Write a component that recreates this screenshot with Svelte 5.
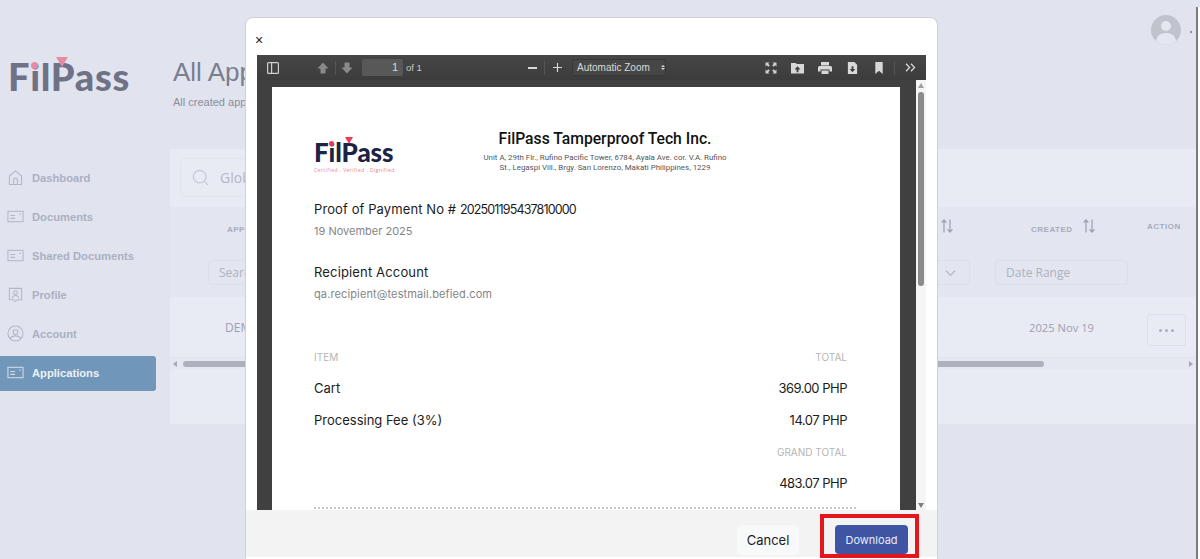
<script>
  const navItems = [
    { label: 'Dashboard', icon: 'home' },
    { label: 'Documents', icon: 'doc' },
    { label: 'Shared Documents', icon: 'doc' },
    { label: 'Profile', icon: 'profile' },
    { label: 'Account', icon: 'account' },
    { label: 'Applications', icon: 'doc', active: true }
  ];
</script>

<div class="page">
  <aside class="sidebar">
    <div class="logo">
      <span class="logo-text">FilPass</span>
      <i class="logo-dot"></i>
      <i class="logo-tri"></i>
    </div>
    <nav>
      {#each navItems as item}
        <div class="nav-item" class:active={item.active}>
          <svg class="nav-icon" viewBox="0 0 18 18" fill="none" stroke="currentColor" stroke-width="1.1">
            {#if item.icon === 'home'}
              <path d="M2.5 16.5V7.5L9 2l6.5 5.5v9z" />
              <path d="M7 16.500V11.500a2 2 0 0 1 4 0v5" />
            {:else if item.icon === 'doc'}
              <rect x="1" y="3.500" width="16" height="11" />
              <path d="M3.500 8h5M3.500 11h5M13 6.500h1.500" />
            {:else if item.icon === 'profile'}
              <path d="M2.500 2.500h13v12h-4.500L9 16.500l-2-2H2.500z" />
              <circle cx="9" cy="7" r="2" />
              <path d="M5.500 12.500c.5-2 2-2.500 3.500-2.500s3 .5 3.500 2.500" />
            {:else}
              <circle cx="9" cy="9" r="8" />
              <circle cx="9" cy="7.500" r="2.500" />
              <path d="M3.500 14.500c1-2.500 3-3 5.500-3s4.500.5 5.500 3" />
            {/if}
          </svg>
          <span>{item.label}</span>
        </div>
      {/each}
    </nav>
  </aside>

  <main class="main">
    <header class="topbar">
      <div class="heading">
        <h1>All Applications</h1>
        <p>All created applications</p>
      </div>
      <div class="account-menu">
        <div class="avatar">
          <svg viewBox="0 0 30 30">
            <circle cx="15" cy="15" r="15" fill="#c1c3cc" />
            <circle cx="15" cy="11" r="5" fill="#e4e6f0" />
            <path d="M5 26c1-6 5-8 10-8s9 2 10 8a15 15 0 0 1-20 0z" fill="#e4e6f0" />
          </svg>
        </div>
        <i class="caret"></i>
      </div>
    </header>

    <section class="card">
      <div class="search-row">
        <div class="global-search">
          <svg viewBox="0 0 20 20" fill="none" stroke="#c3c7d4" stroke-width="1.300">
            <circle cx="8.500" cy="8.500" r="7" />
            <path d="M14 14l4 4" />
          </svg>
          <span>Global Search</span>
        </div>
      </div>

      <div class="table">
        <div class="head-row">
          <div class="th first">APPLICATION ID</div>
          <div class="th status">
            STATUS
            <svg class="sort" viewBox="0 0 12 14" fill="none" stroke="#9a9eb0" stroke-width="1.200">
              <path d="M3 13.500V1M.6 3.700L3 1l2.400 2.700M9 .5V13M6.600 10.300L9 13l2.400-2.700" />
            </svg>
          </div>
          <div class="th created">
            CREATED
            <svg class="sort" viewBox="0 0 12 14" fill="none" stroke="#9a9eb0" stroke-width="1.200">
              <path d="M3 13.500V1M.6 3.700L3 1l2.400 2.700M9 .5V13M6.600 10.300L9 13l2.400-2.700" />
            </svg>
          </div>
          <div class="th action">ACTION</div>
        </div>
        <div class="filter-row">
          <div class="cell first"><div class="field search-field">Search</div></div>
          <div class="cell status">
            <div class="field select-field">
              <svg viewBox="0 0 12 8" fill="none" stroke="#a9adbd" stroke-width="1.100"><path d="M1 1.500l5 5 5-5" /></svg>
            </div>
          </div>
          <div class="cell created"><div class="field date-field">Date Range</div></div>
          <div class="cell action"></div>
        </div>
        <div class="data-row">
          <div class="cell first demo">DEMO</div>
          <div class="cell status"><span class="pill"></span></div>
          <div class="cell created date">2025 Nov 19</div>
          <div class="cell action"><div class="more"><i></i><i></i><i></i></div></div>
        </div>
        <div class="h-scroll">
          <span class="arrow left"></span>
          <div class="h-thumb"></div>
          <span class="arrow right"></span>
        </div>
      </div>
    </section>
  </main>

  <div class="page-scroll"></div>

  <div class="modal">
    <div class="close">×</div>

    <div class="viewer">
      <div class="toolbar">
        <svg class="tool sidebar-toggle" viewBox="0 0 12 12">
          <path fill-rule="evenodd" fill="#d0d0d0" d="M0 1.500A1.500 1.500 0 0 1 1.500 0h9A1.500 1.500 0 0 1 12 1.500v9a1.500 1.500 0 0 1-1.500 1.500h-9A1.500 1.500 0 0 1 0 10.500zM1.200 1.200v9.600h2.800V1.200zM5.200 1.200v9.600h5.600V1.200z" />
        </svg>
        <svg class="tool nav-up" viewBox="0 0 12 12"><path fill="#8a8a8a" d="M6 .5L11.500 6.500H8.500V11.500H3.500V6.500H.5z" /></svg>
        <span class="sep"></span>
        <svg class="tool nav-down" viewBox="0 0 12 12"><path fill="#8a8a8a" d="M6 11.500L11.500 5.500H8.500V.5H3.500V5.500H.5z" /></svg>
        <div class="page-input">1</div>
        <span class="of">of 1</span>
        <span class="zoom-out"></span>
        <span class="sep"></span>
        <svg class="tool zoom-in" viewBox="0 0 10 10"><path d="M5 0v10M0 5h10" stroke="#d8d8d8" stroke-width="1.300" /></svg>
        <div class="zoom-select"><span class="zoom-label">Automatic Zoom</span><span class="updown"><i></i><i></i></span></div>
        <div class="spacer"></div>
        <svg class="tool fs" viewBox="0 0 12 12" fill="#d0d0d0">
          <path d="M.5.500h4L3.200 1.800 4.800 3.400 3.400 4.800 1.800 3.200.5 4.500zM11.500.5v4L10.200 3.200 8.600 4.800 7.200 3.400 8.800 1.800 7.500.5zM.5 11.500v-4l1.300 1.300 1.600-1.600 1.400 1.400-1.600 1.600 1.300 1.300zM11.500 11.500h-4l1.300-1.300-1.600-1.600 1.400-1.400 1.600 1.600 1.300-1.300z" />
        </svg>
        <svg class="tool folder" viewBox="0 0 14 12" fill="#d8d8d8">
          <path fill-rule="evenodd" d="M0 .5h5l1.200 1.300H14V12H0zM7 4L3.800 7.500H6v3h2v-3h2.200z" />
        </svg>
        <svg class="tool print" viewBox="0 0 14 12" fill="#d8d8d8">
          <path fill-rule="evenodd" d="M3 0h8v3.500H3zM1.500 4h11A1.500 1.500 0 0 1 14 5.500V9.500h-2.500V7.500h-9v2H0V5.500A1.500 1.500 0 0 1 1.500 4zM3.500 8.500h7V12h-7z" />
        </svg>
        <svg class="tool save" viewBox="0 0 11 13" fill="#d8d8d8">
          <path fill-rule="evenodd" d="M.5 0h7l3 3v10H.5zM5.500 11L8.500 7.500H6.500V4.500H4.500v3H2.500z" />
        </svg>
        <svg class="tool book" viewBox="0 0 8 13" fill="#d8d8d8"><path d="M0 0h8v13L4 9.500 0 13z" /></svg>
        <span class="sep tall"></span>
        <svg class="tool more-tools" viewBox="0 0 12 10" fill="none" stroke="#d8d8d8" stroke-width="1.400">
          <path d="M1 .8L5 5 1 9.200M6.500.8L10.500 5l-4 4.200" />
        </svg>
      </div>

      <div class="viewer-body">
        <div class="pdf-page">
          <div class="pdf-top">
            <div class="pdf-logo">
              <div class="pdf-mark">
                <span>FilPass</span>
                <i class="pdf-dot"></i>
                <i class="pdf-tri"></i>
              </div>
              <small>Certified . Verified . Dignified</small>
            </div>
            <div class="company">
              <h2>FilPass Tamperproof Tech Inc.</h2>
              <p>Unit A, 29th Flr., Rufino Pacific Tower, 6784, Ayala Ave. cor. V.A. Rufino</p>
              <p>St., Legaspi Vill., Brgy. San Lorenzo, Makati Philippines, 1229</p>
            </div>
          </div>

          <div class="proof">Proof of Payment No # <span class="num">202501195437810000</span></div>
          <div class="muted proof-date">19 November 2025</div>
          <div class="recipient">Recipient Account</div>
          <div class="muted email">qa.recipient@testmail.befied.com</div>

          <div class="line label-line"><span>ITEM</span><span>TOTAL</span></div>
          <div class="line cart"><span>Cart</span><span class="amt">369.00 PHP</span></div>
          <div class="line fee"><span>Processing Fee (3%)</span><span class="amt">14.07 PHP</span></div>
          <div class="line label-line grand"><span></span><span>GRAND TOTAL</span></div>
          <div class="line amount"><span></span><span class="amt">483.07 PHP</span></div>
          <div class="dashes"></div>
        </div>

        <div class="pdf-scroll">
          <span class="tri-up"></span>
          <div class="pdf-thumb"></div>
          <span class="tri-down"></span>
        </div>
      </div>
    </div>

    <footer class="modal-foot">
      <button class="btn cancel">Cancel</button>
      <div class="highlight">
        <button class="btn download">Download</button>
      </div>
    </footer>
  </div>
</div>

<style>
  :global(body) {
    margin: 0;
    overflow: hidden;
    background: #e1e4ef;
  }

  .page {
    position: relative;
    display: flex;
    width: 1200px;
    height: 559px;
    overflow: hidden;
    background: #e1e4ef;
    font-family: "Liberation Sans", Arial, sans-serif;
  }

  /* sidebar */
  .sidebar {
    width: 170px;
    flex-shrink: 0;
  }

  .logo {
    position: relative;
    height: 40px;
    margin: 55px 0 0 8px;
  }

  .logo-text {
    font-family: Lato, sans-serif;
    font-weight: 900;
    font-size: 38px;
    line-height: 42px;
    letter-spacing: 0.700px;
    color: #6f7286;
  }

  .logo-dot {
    position: absolute;
    left: 23px;
    top: 7px;
    width: 7px;
    height: 7px;
    border-radius: 50%;
    background: #e88aa2;
  }

  .logo-tri {
    position: absolute;
    left: 48px;
    top: 2px;
    width: 0;
    height: 0;
    border-left: 6px solid transparent;
    border-right: 6px solid transparent;
    border-top: 10px solid #e88aa2;
  }

  nav {
    display: flex;
    flex-direction: column;
    margin-top: 66px;
  }

  .nav-item {
    display: flex;
    align-items: center;
    gap: 8px;
    width: 156px;
    height: 35px;
    margin-bottom: 4px;
    padding: 0 0 2px 7px;
    box-sizing: border-box;
    font-size: 11.200px;
    font-weight: 700;
    color: #abb0c3;
    border-radius: 0 3px 3px 0;
  }

  .nav-icon {
    width: 17px;
    height: 17px;
    color: #b2b7c8;
  }

  .active {
    background: #7096b9;
    color: #eef1f7;
  }

  .active .nav-icon {
    color: #d3dce8;
  }

  /* main */
  .main {
    flex: 1;
    min-width: 0;
    padding-right: 4px;
  }

  .topbar {
    display: flex;
    justify-content: space-between;
    height: 149px;
    box-sizing: border-box;
    padding: 56px 0 0 3px;
  }

  h1 {
    margin: 0;
    font-size: 26px;
    font-weight: 400;
    line-height: 32px;
    color: #7b7e8d;
  }

  .heading p {
    margin: 8px 0 0;
    font-size: 11px;
    color: #8b8e9e;
  }

  .account-menu {
    display: flex;
    align-items: center;
    gap: 9px;
    height: 30px;
    margin-top: -41px;
    padding-right: 4px;
  }

  .avatar {
    width: 30px;
    height: 30px;
  }

  .caret {
    width: 2px;
    height: 2px;
    margin-top: 4px;
    background: #8f92a3;
  }

  .card {
    height: 275px;
    background: #e9ebf4;
  }

  .search-row {
    height: 58px;
    padding: 9px 10px 0;
    box-sizing: border-box;
  }

  .global-search {
    display: flex;
    align-items: center;
    gap: 10px;
    width: 300px;
    height: 39px;
    padding-left: 11px;
    box-sizing: border-box;
    border: 1px solid #e2e4ee;
    border-radius: 5px;
    font-family: "Open Sans", sans-serif;
    font-size: 14px;
    color: #b4b7c6;
  }

  .global-search svg {
    width: 18px;
    height: 18px;
  }

  .head-row,
  .filter-row,
  .data-row {
    display: grid;
    grid-template-columns: 660px 152px 158px 56px;
  }

  .head-row {
    height: 44px;
    align-items: center;
    background: #e3e6f0;
  }

  .filter-row {
    height: 46px;
    background: #e3e6f0;
  }

  .th {
    display: flex;
    align-items: center;
    font-size: 8px;
    font-weight: 700;
    letter-spacing: 0.500px;
    color: #a7abbc;
  }

  .th.first {
    padding-left: 57px;
  }

  .th.status {
    justify-content: flex-end;
    padding-right: 29px;
  }

  .th.created {
    padding-left: 49px;
  }

  .th.action {
    padding: 0 0 6px 7px;
  }

  .sort {
    width: 12px;
    height: 14px;
    margin: 0 0 6px 10px;
  }

  .field {
    height: 25px;
    box-sizing: border-box;
    padding-left: 10px;
    margin-top: 9px;
    border: 1px solid #dcdfea;
    border-radius: 4px;
    font-family: "Open Sans", sans-serif;
    font-size: 12px;
    line-height: 23px;
    color: #adb1c0;
  }

  .search-field {
    width: 200px;
    margin-left: 38px;
  }

  .select-field {
    position: relative;
    width: 120px;
    margin-left: 20px;
  }

  .select-field svg {
    position: absolute;
    right: 13px;
    top: 8px;
    width: 11px;
    height: 8px;
  }

  .date-field {
    width: 133px;
    margin-left: 13px;
  }

  .data-row {
    height: 61px;
    align-items: center;
    border-bottom: 1px solid #e1e3ed;
    box-sizing: border-box;
    font-family: "Open Sans", sans-serif;
    font-size: 12px;
    color: #9da0b0;
  }

  .demo {
    padding: 1px 0 0 55px;
  }

  .pill {
    display: block;
    width: 40px;
    height: 20px;
    margin-left: 69px;
    border-radius: 10px;
    background: #d3ebe8;
  }

  .date {
    padding: 1px 0 0 47px;
    font-size: 11.200px;
  }

  .more {
    display: flex;
    align-items: center;
    justify-content: center;
    gap: 3px;
    width: 39px;
    height: 32px;
    margin: 6px 0 0 7px;
    border: 1px solid #dcdfea;
    border-radius: 3px;
    box-sizing: border-box;
  }

  .more i {
    width: 3px;
    height: 3px;
    border-radius: 50%;
    background: #a9adbd;
  }

  .h-scroll {
    display: flex;
    align-items: center;
    height: 11px;
    padding: 0 3px;
    background: #e6e8f1;
  }

  .h-thumb {
    width: 861px;
    height: 6px;
    margin-left: 6px;
    border-radius: 3px;
    background: #aeb0bd;
  }

  .arrow {
    width: 0;
    height: 0;
    border-top: 3px solid transparent;
    border-bottom: 3px solid transparent;
  }

  .arrow.left {
    border-right: 4px solid #a5a7b4;
  }

  .arrow.right {
    margin-left: auto;
    border-left: 4px solid #a5a7b4;
  }

  .page-scroll {
    position: absolute;
    right: 0;
    top: 7px;
    bottom: 0;
    width: 4px;
    background: #ffffff;
    border-left: 2px solid #7a7b82;
    box-sizing: border-box;
  }

  /* modal */
  .modal {
    position: absolute;
    left: 245px;
    top: 17px;
    width: 693px;
    height: 560px;
    box-sizing: border-box;
    background: #fff;
    border: 1px solid #ced1dc;
    border-radius: 8px;
    overflow: hidden;
  }

  .close {
    height: 37px;
    padding: 15px 0 0 9px;
    box-sizing: border-box;
    font-family: "Liberation Sans", sans-serif;
    font-size: 14px;
    line-height: 15px;
    color: #222;
  }

  .viewer {
    margin: 0 11px;
    height: 455px;
    display: flex;
    flex-direction: column;
    background: #404040;
  }

  .toolbar {
    display: flex;
    align-items: center;
    flex-shrink: 0;
    height: 25px;
    padding-left: 10px;
    background: linear-gradient(#464646, #3c3c3c);
    box-shadow: 0 1px 0 #303030;
    font-size: 11px;
    color: #d9d9d9;
  }

  .tool {
    display: block;
    width: 13px;
    height: 12px;
    margin-right: 14px;
  }

  .sidebar-toggle {
    width: 12px;
    margin-right: 38px;
  }

  .nav-up {
    width: 12px;
    margin-right: 6px;
  }

  .nav-down {
    width: 12px;
    margin: 0 0 0 5px;
  }

  .sep {
    width: 1px;
    height: 14px;
    background: #555;
  }

  .page-input {
    width: 41px;
    height: 17px;
    margin-left: 9px;
    padding-right: 5px;
    box-sizing: border-box;
    text-align: right;
    line-height: 17px;
    background: #585858;
    border-radius: 2px;
  }

  .of {
    margin-left: 3px;
    width: 122px;
    font-size: 9.500px;
    color: #c8c8c8;
  }

  .zoom-out {
    width: 9px;
    height: 2px;
    margin-right: 7px;
    background: #d8d8d8;
  }

  .zoom-in {
    width: 9px;
    height: 9px;
    margin: 0 10px 0 8px;
  }

  .zoom-select {
    display: flex;
    align-items: center;
    width: 94px;
    height: 17px;
    padding-left: 4px;
    box-sizing: border-box;
    background: #464646;
    border: 1px solid #373737;
    border-radius: 2px;
    font-size: 10px;
  }

  .zoom-label {
    white-space: nowrap;
  }

  .updown {
    display: flex;
    flex-direction: column;
    gap: 1px;
    margin-left: 11px;
  }

  .updown i {
    width: 0;
    height: 0;
    border-left: 2px solid transparent;
    border-right: 2px solid transparent;
    border-top: 2.500px solid #d8d8d8;
  }

  .updown i:first-child {
    border-top: 0;
    border-bottom: 2.500px solid #d8d8d8;
  }

  .spacer {
    flex: 1;
  }

  .fs {
    width: 12px;
    margin-right: 14px;
  }

  .folder {
    margin-right: 14px;
  }

  .print {
    width: 14px;
    margin-right: 15px;
  }

  .save {
    width: 11px;
    margin-right: 17px;
  }

  .book {
    width: 8px;
    margin-right: 11px;
  }

  .sep.tall {
    height: 14px;
    margin-right: 10px;
  }

  .more-tools {
    width: 11px;
    height: 9px;
    margin-right: 10px;
  }

  .viewer-body {
    position: relative;
    flex: 1;
    min-height: 0;
    display: flex;
    padding-top: 7px;
    background: #404040;
    box-sizing: border-box;
    overflow: hidden;
  }

  .pdf-page {
    width: 628px;
    margin-left: 15px;
    flex-shrink: 0;
    padding: 44px 53px 0 42px;
    box-sizing: border-box;
    background: #fff;
    font-family: Inter, sans-serif;
    color: #1c1c1c;
  }

  .pdf-top {
    display: flex;
    height: 63px;
  }

  .pdf-logo {
    width: 118px;
    padding-top: 9px;
    flex-shrink: 0;
  }

  .pdf-mark {
    position: relative;
    height: 24px;
    font-family: Lato, sans-serif;
    font-weight: 900;
    font-size: 26px;
    line-height: 24px;
    letter-spacing: -0.1px;
    color: #1c2344;
  }

  .pdf-dot {
    position: absolute;
    left: 15px;
    top: 1px;
    width: 5px;
    height: 5px;
    border-radius: 50%;
    background: #ee3a5a;
  }

  .pdf-tri {
    position: absolute;
    left: 31px;
    top: -3px;
    border-left: 4px solid transparent;
    border-right: 4px solid transparent;
    border-top: 7px solid #ee3a5a;
  }

  .pdf-logo small {
    display: block;
    margin-top: 3px;
    font-family: "Open Sans", sans-serif;
    font-size: 5px;
    letter-spacing: 0.450px;
    color: #ee7d90;
    white-space: nowrap;
  }

  .company {
    width: 346px;
    text-align: center;
    font-family: Roboto, sans-serif;
  }

  h2 {
    margin: -2px 0 5px;
    font-size: 15.700px;
    font-weight: 500;
    line-height: 19px;
    color: #111;
  }

  .company p {
    margin: 0;
    font-size: 7.900px;
    line-height: 9.500px;
    color: #555;
    white-space: nowrap;
  }

  .proof {
    margin-top: 6px;
    font-size: 13px;
    line-height: 18px;
    letter-spacing: 0.1px;
  }

  .num {
    font-size: 12.500px;
    letter-spacing: -0.850px;
  }

  .muted {
    font-size: 11px;
    color: #858585;
    line-height: 14px;
  }

  .proof-date {
    margin-top: 5px;
  }

  .recipient {
    margin-top: 25px;
    font-size: 13px;
    line-height: 18px;
    letter-spacing: 0.150px;
  }

  .email {
    margin-top: 6px;
    letter-spacing: 0.120px;
  }

  .line {
    display: flex;
    justify-content: space-between;
    font-size: 13px;
    line-height: 18px;
  }

  .amt {
    letter-spacing: -0.500px;
  }

  .label-line {
    font-size: 10px;
    color: #b5b5b5;
    line-height: 14px;
  }

  .label-line:not(.grand) {
    margin-top: 49px;
  }

  .cart {
    margin-top: 15px;
  }

  .fee {
    margin-top: 14px;
  }

  .grand {
    margin-top: 16px;
  }

  .amount {
    margin-top: 15px;
  }

  .dashes {
    margin: 15px -9px 0 0;
    border-top: 2px dotted #c6c6c6;
  }

  .pdf-scroll {
    position: absolute;
    right: 0;
    top: 0;
    bottom: 0;
    width: 10px;
    background: #f5f5f5;
  }

  .pdf-thumb {
    position: absolute;
    left: 2px;
    top: 12px;
    width: 6px;
    height: 194px;
    border-radius: 3px;
    background: #8b8b8b;
  }

  .tri-up,
  .tri-down {
    position: absolute;
    left: 2px;
    width: 0;
    height: 0;
    border-left: 3.500px solid transparent;
    border-right: 3.500px solid transparent;
  }

  .tri-up {
    top: 3px;
    border-bottom: 5px solid #a0a0a0;
  }

  .tri-down {
    bottom: 2px;
    border-top: 5px solid #7e7e7e;
  }

  .modal-foot {
    display: flex;
    justify-content: flex-end;
    align-items: flex-start;
    height: 47px;
    padding: 4px 18px 0 0;
    box-sizing: border-box;
    background: #f3f3f3;
  }

  .highlight {
    margin-left: 21px;
    width: 99px;
    height: 44px;
    flex-shrink: 0;
    box-sizing: border-box;
    border: 4px solid #e6141b;
    padding: 7px 0 0 11px;
  }

  .btn {
    border: 0;
    font-family: Inter, sans-serif;
    cursor: pointer;
  }

  .cancel {
    width: 62px;
    height: 30px;
    margin-top: 11px;
    border-radius: 5px;
    background: #f8f9fa;
    font-size: 13px;
    color: #1d1d1d;
  }

  .download {
    display: block;
    width: 73px;
    height: 29px;
    border-radius: 4px;
    background: #3f55a3;
    font-size: 11px;
    color: #e8ebf5;
    padding: 0;
  }
</style>
